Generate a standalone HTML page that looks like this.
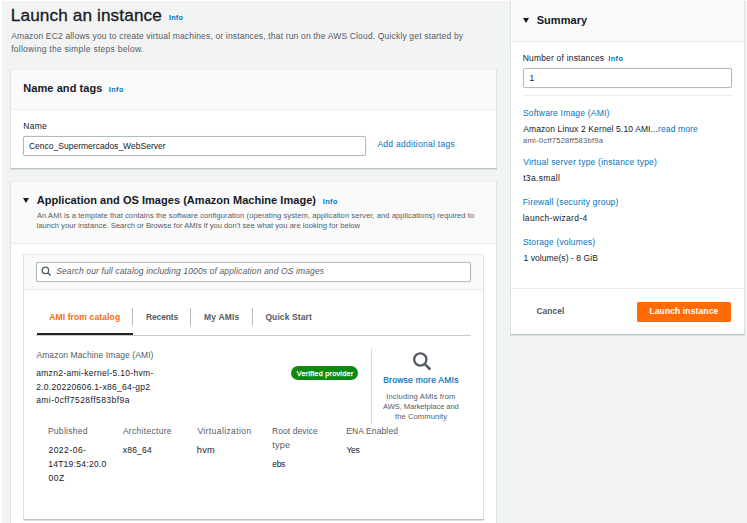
<!DOCTYPE html>
<html><head><meta charset="utf-8">
<style>
*{box-sizing:border-box;margin:0;padding:0}
html,body{width:747px;height:523px;overflow:hidden;background:#f2f3f3;font-family:"Liberation Sans",sans-serif;color:#16191f}
.a{position:absolute;white-space:nowrap}
.card{position:absolute;background:#fff;border-left:1px solid #dde2e2;border-right:1px solid #dde2e2;border-top:1px solid #eceeee;box-shadow:0 1px 0 #bcc5c5,0 2px 0 #dce1e1}
.hd{position:absolute;left:0;right:0;top:0;background:#fafafa;border-bottom:1px solid #eaeded}
.inp{position:absolute;background:#fff;border:1px solid #b0bbbc;border-radius:2px;box-shadow:0 0 1px rgba(170,183,184,.7)}
.t{left:0;top:0;transform-origin:0 0}
.tri{position:absolute;width:0;height:0;border-left:3.4px solid transparent;border-right:3.4px solid transparent;border-top:5.5px solid #16191f}
.vl{position:absolute;width:1px;background:#b4bebe}
</style></head><body>
<div class="a" style="left:0;top:0;width:2px;height:523px;background:#fff"></div><div class="a" style="left:0;top:0;width:747px;height:1px;background:#fff"></div>
<!-- card 1: name and tags -->
<div class="card" style="left:10px;top:69px;width:487px;height:99px"><div class="hd" style="height:40px"></div></div>
<div class="inp" style="left:23px;top:136px;width:342.5px;height:19.5px"></div>

<!-- card 2: application and OS images -->
<div class="card" style="left:10px;top:181px;width:487px;height:361px"><div class="hd" style="height:61.5px"></div></div>
<div class="tri" style="left:23.2px;top:198px"></div>
<div class="card" style="left:22.5px;top:253.7px;width:461.5px;height:265.3px"><div class="hd" style="height:35.5px"></div></div>
<div class="inp" style="left:36px;top:261.5px;width:434.5px;height:20px"></div>
<svg class="a" style="left:41px;top:266px" width="11" height="11" viewBox="0 0 11 11"><circle cx="4.4" cy="4.4" r="3.2" fill="none" stroke="#545b64" stroke-width="1.3"/><path d="M6.8 6.8L9.6 9.6" stroke="#545b64" stroke-width="1.4"/></svg>

<!-- tabs -->
<div class="a" style="left:36px;top:334.5px;width:434.5px;height:1px;background:#c4cccc"></div>
<div class="a" style="left:36.5px;top:333px;width:96px;height:2.2px;background:#1f2328"></div>
<div class="vl" style="left:132.2px;top:308px;height:18px"></div>
<div class="vl" style="left:190.2px;top:308px;height:18px"></div>
<div class="vl" style="left:251.5px;top:308px;height:18px"></div>

<!-- AMI details -->
<div class="a" style="left:291px;top:366.3px;width:66.5px;height:13.7px;border-radius:7px;background:#0f8a10"></div>
<div class="a" style="left:371px;top:349px;width:1px;height:75px;background:#d5dbdb"></div>
<svg class="a" style="left:411px;top:350px" width="22" height="22" viewBox="0 0 22 22"><circle cx="9.3" cy="9.5" r="6.1" fill="none" stroke="#545b64" stroke-width="2.3"/><path d="M13.9 14.1L19.3 19.5" stroke="#545b64" stroke-width="2.6"/></svg>

<!-- summary -->
<div class="card" style="left:510px;top:-2px;width:235px;height:335.5px"><div class="hd" style="height:43px"></div></div>
<div class="tri" style="left:523.2px;top:18.2px"></div>
<div class="inp" style="left:523px;top:68px;width:208.5px;height:19.5px"></div>
<div class="a" style="left:523px;top:95px;width:208.5px;height:1px;background:#eaeded"></div>
<div class="a" style="left:510.5px;top:288px;width:233.5px;height:1px;background:#eaeded"></div>
<div class="a" style="left:636.7px;top:302px;width:94.5px;height:20px;border-radius:1.5px;background:#ff6c06"></div>

<div class="a t" id="title" style="transform:translate(10.80px,4.36px) rotate(0.0001deg);font-size:17.2px;line-height:22.36px;letter-spacing:0.115px;color:#16191f;-webkit-text-stroke:0.3px #16191f">Launch an instance</div>
<div class="a t" id="tinfo" style="transform:translate(168.99px,13.48px) rotate(0.0001deg);font-size:7.3px;line-height:9.49px;letter-spacing:0.167px;color:#0073bb;font-weight:bold">Info</div>
<div class="a t" id="sub1" style="transform:translate(11.15px,30.78px) rotate(0.0001deg);font-size:8.5px;line-height:11.05px;letter-spacing:0.165px;color:#545b64">Amazon EC2 allows you to create virtual machines, or instances, that run on the AWS Cloud. Quickly get started by</div>
<div class="a t" id="sub2" style="transform:translate(11.15px,44.03px) rotate(0.0001deg);font-size:8.5px;line-height:11.05px;letter-spacing:0.273px;color:#545b64">following the simple steps below.</div>
<div class="a t" id="nt" style="transform:translate(23.23px,81.04px) rotate(0.0001deg);font-size:11px;line-height:14.3px;letter-spacing:0.083px;font-weight:bold">Name and tags</div>
<div class="a t" id="ntinfo" style="transform:translate(108.74px,84.98px) rotate(0.0001deg);font-size:7.3px;line-height:9.49px;letter-spacing:0.417px;color:#0073bb;font-weight:bold">Info</div>
<div class="a t" id="nm" style="transform:translate(23.16px,121.28px) rotate(0.0001deg);font-size:8.5px;line-height:11.05px;letter-spacing:0.333px;">Name</div>
<div class="a t" id="nmv" style="transform:translate(28.91px,141.03px) rotate(0.0001deg);font-size:8.5px;line-height:11.05px;letter-spacing:0.009px;">Cenco_Supermercados_WebServer</div>
<div class="a t" id="addt" style="transform:translate(377.40px,139.03px) rotate(0.0001deg);font-size:8.5px;line-height:11.05px;letter-spacing:0.278px;color:#0073bb">Add additional tags</div>
<div class="a t" id="app" style="transform:translate(36.73px,193.29px) rotate(0.0001deg);font-size:11px;line-height:14.3px;letter-spacing:0.037px;font-weight:bold">Application and OS Images (Amazon Machine Image)</div>
<div class="a t" id="appinfo" style="transform:translate(322.74px,197.48px) rotate(0.0001deg);font-size:7.3px;line-height:9.49px;letter-spacing:0.417px;color:#0073bb;font-weight:bold">Info</div>
<div class="a t" id="d1" style="transform:translate(36.97px,210.88px) rotate(0.0001deg);font-size:7.6px;line-height:9.88px;letter-spacing:0.058px;color:#545b64">An AMI is a template that contains the software configuration (operating system, application server, and applications) required to</div>
<div class="a t" id="d2" style="transform:translate(36.47px,220.88px) rotate(0.0001deg);font-size:7.6px;line-height:9.88px;letter-spacing:0.019px;color:#545b64">launch your instance. Search or Browse for AMIs if you don't see what you are looking for below</div>
<div class="a t" id="srch" style="transform:translate(56.16px,266.03px) rotate(0.0001deg);font-size:8.5px;line-height:11.05px;letter-spacing:0.127px;color:#545b64;font-style:italic">Search our full catalog including 1000s of application and OS images</div>
<div class="a t" id="tab1" style="transform:translate(49.16px,311.53px) rotate(0.0001deg);font-size:8.5px;line-height:11.05px;letter-spacing:0.133px;color:#f86d13;font-weight:bold">AMI from catalog</div>
<div class="a t" id="tab2" style="transform:translate(145.91px,311.53px) rotate(0.0001deg);font-size:8.5px;line-height:11.05px;letter-spacing:-0.125px;color:#545b64;font-weight:bold">Recents</div>
<div class="a t" id="tab3" style="transform:translate(203.91px,311.53px) rotate(0.0001deg);font-size:8.5px;line-height:11.05px;letter-spacing:0.208px;color:#545b64;font-weight:bold">My AMIs</div>
<div class="a t" id="tab4" style="transform:translate(265.40px,311.53px) rotate(0.0001deg);font-size:8.5px;line-height:11.05px;letter-spacing:0.100px;color:#545b64;font-weight:bold">Quick Start</div>
<div class="a t" id="ami0" style="transform:translate(36.41px,349.53px) rotate(0.0001deg);font-size:8.5px;line-height:11.05px;letter-spacing:0.090px;color:#545b64">Amazon Machine Image (AMI)</div>
<div class="a t" id="ami1" style="transform:translate(36.16px,368.28px) rotate(0.0001deg);font-size:8.5px;line-height:11.05px;letter-spacing:0.320px;">amzn2-ami-kernel-5.10-hvm-</div>
<div class="a t" id="ami2" style="transform:translate(36.16px,381.53px) rotate(0.0001deg);font-size:8.5px;line-height:11.05px;letter-spacing:0.292px;">2.0.20220606.1-x86_64-gp2</div>
<div class="a t" id="ami3" style="transform:translate(36.16px,394.53px) rotate(0.0001deg);font-size:8.5px;line-height:11.05px;letter-spacing:0.450px;">ami-0cff7528ff583bf9a</div>
<div class="a t" id="badge" style="transform:translate(296.74px,368.98px) rotate(0.0001deg);font-size:7.3px;line-height:9.49px;letter-spacing:0.234px;color:#fff;-webkit-text-stroke:0.25px #fff">Verified provider</div>
<div class="a t" id="brw" style="transform:translate(383.15px,375.03px) rotate(0.0001deg);font-size:8.5px;line-height:11.05px;letter-spacing:0.267px;color:#0073bb;-webkit-text-stroke:0.2px #0073bb">Browse more AMIs</div>
<div class="a t" id="b1" style="transform:translate(386.22px,392.43px) rotate(0.0001deg);font-size:7.6px;line-height:9.88px;letter-spacing:0.139px;color:#545b64">Including AMIs from</div>
<div class="a t" id="b2" style="transform:translate(382.97px,401.93px) rotate(0.0001deg);font-size:7.6px;line-height:9.88px;letter-spacing:-0.079px;color:#545b64">AWS, Marketplace and</div>
<div class="a t" id="b3" style="transform:translate(394.97px,412.18px) rotate(0.0001deg);font-size:7.6px;line-height:9.88px;letter-spacing:0.083px;color:#545b64">the Community</div>
<div class="a t" id="c1" style="transform:translate(47.91px,426.28px) rotate(0.0001deg);font-size:8.5px;line-height:11.05px;letter-spacing:0.281px;color:#545b64">Published</div>
<div class="a t" id="c2" style="transform:translate(122.91px,426.28px) rotate(0.0001deg);font-size:8.5px;line-height:11.05px;letter-spacing:0.295px;color:#545b64">Architecture</div>
<div class="a t" id="c3" style="transform:translate(197.41px,426.28px) rotate(0.0001deg);font-size:8.5px;line-height:11.05px;letter-spacing:0.404px;color:#545b64">Virtualization</div>
<div class="a t" id="c4" style="transform:translate(271.90px,426.28px) rotate(0.0001deg);font-size:8.5px;line-height:11.05px;letter-spacing:0.100px;color:#545b64">Root device</div>
<div class="a t" id="c4b" style="transform:translate(272.37px,439.53px) rotate(0.0001deg);font-size:9px;line-height:11.7px;letter-spacing:0.167px;color:#545b64">type</div>
<div class="a t" id="c5" style="transform:translate(346.15px,426.28px) rotate(0.0001deg);font-size:8.5px;line-height:11.05px;letter-spacing:0.125px;color:#545b64">ENA Enabled</div>
<div class="a t" id="v1" style="transform:translate(48.41px,445.03px) rotate(0.0001deg);font-size:8.5px;line-height:11.05px;letter-spacing:0.500px;">2022-06-</div>
<div class="a t" id="v1b" style="transform:translate(48.16px,459.03px) rotate(0.0001deg);font-size:8.5px;line-height:11.05px;letter-spacing:0.271px;">14T19:54:20.0</div>
<div class="a t" id="v1c" style="transform:translate(48.41px,472.53px) rotate(0.0001deg);font-size:8.5px;line-height:11.05px;letter-spacing:0.625px;">00Z</div>
<div class="a t" id="v2" style="transform:translate(122.66px,445.03px) rotate(0.0001deg);font-size:8.5px;line-height:11.05px;letter-spacing:0.250px;">x86_64</div>
<div class="a t" id="v3" style="transform:translate(196.86px,445.08px) rotate(0.0001deg);font-size:9.2px;line-height:11.96px;letter-spacing:0.250px;">hvm</div>
<div class="a t" id="v4" style="transform:translate(272.15px,458.78px) rotate(0.0001deg);font-size:8.5px;line-height:11.05px;letter-spacing:-0.250px;">ebs</div>
<div class="a t" id="v5" style="transform:translate(346.40px,445.03px) rotate(0.0001deg);font-size:8.5px;line-height:11.05px;letter-spacing:-0.250px;">Yes</div>
<div class="a t" id="sum" style="transform:translate(536.73px,12.79px) rotate(0.0001deg);font-size:11px;line-height:14.3px;letter-spacing:0.042px;font-weight:bold">Summary</div>
<div class="a t" id="noi" style="transform:translate(522.65px,52.78px) rotate(0.0001deg);font-size:8.5px;line-height:11.05px;letter-spacing:0.194px;">Number of instances</div>
<div class="a t" id="noiinfo" style="transform:translate(608.24px,53.73px) rotate(0.0001deg);font-size:7.3px;line-height:9.49px;letter-spacing:0.417px;color:#0073bb;font-weight:bold">Info</div>
<div class="a t" id="one" style="transform:translate(529.40px,72.78px) rotate(0.0001deg);font-size:8.5px;line-height:11.05px;letter-spacing:0.000px;">1</div>
<div class="a t" id="s1" style="transform:translate(522.90px,107.53px) rotate(0.0001deg);font-size:8.5px;line-height:11.05px;letter-spacing:0.197px;color:#0073bb">Software Image (AMI)</div>
<div class="a t" id="s1v" style="transform:translate(523.15px,123.78px) rotate(0.0001deg);font-size:8.5px;line-height:11.05px;letter-spacing:0.122px;">Amazon Linux 2 Kernel 5.10 AMI...<span style="color:#0073bb">read more</span></div>
<div class="a t" id="s1w" style="transform:translate(522.97px,135.98px) rotate(0.0001deg);font-size:7.6px;line-height:9.88px;letter-spacing:0.238px;color:#545b64">ami-0cff7528ff583bf9a</div>
<div class="a t" id="s2" style="transform:translate(523.15px,157.03px) rotate(0.0001deg);font-size:8.5px;line-height:11.05px;letter-spacing:0.213px;color:#0073bb">Virtual server type (instance type)</div>
<div class="a t" id="s2v" style="transform:translate(523.15px,173.28px) rotate(0.0001deg);font-size:8.5px;line-height:11.05px;letter-spacing:0.344px;">t3a.small</div>
<div class="a t" id="s3" style="transform:translate(522.65px,196.53px) rotate(0.0001deg);font-size:8.5px;line-height:11.05px;letter-spacing:0.208px;color:#0073bb">Firewall (security group)</div>
<div class="a t" id="s3v" style="transform:translate(522.65px,212.78px) rotate(0.0001deg);font-size:8.5px;line-height:11.05px;letter-spacing:0.321px;">launch-wizard-4</div>
<div class="a t" id="s4" style="transform:translate(522.90px,236.53px) rotate(0.0001deg);font-size:8.5px;line-height:11.05px;letter-spacing:0.172px;color:#0073bb">Storage (volumes)</div>
<div class="a t" id="s4v" style="transform:translate(523.40px,252.78px) rotate(0.0001deg);font-size:8.5px;line-height:11.05px;letter-spacing:0.069px;">1 volume(s) - 8 GiB</div>
<div class="a t" id="cancel" style="transform:translate(536.40px,306.03px) rotate(0.0001deg);font-size:8.5px;line-height:11.05px;letter-spacing:0.000px;color:#545b64;font-weight:bold">Cancel</div>
<div class="a t" id="launch" style="transform:translate(649.40px,306.03px) rotate(0.0001deg);font-size:8.5px;line-height:11.05px;letter-spacing:0.125px;color:#fff;font-weight:bold">Launch instance</div>
</body></html>
